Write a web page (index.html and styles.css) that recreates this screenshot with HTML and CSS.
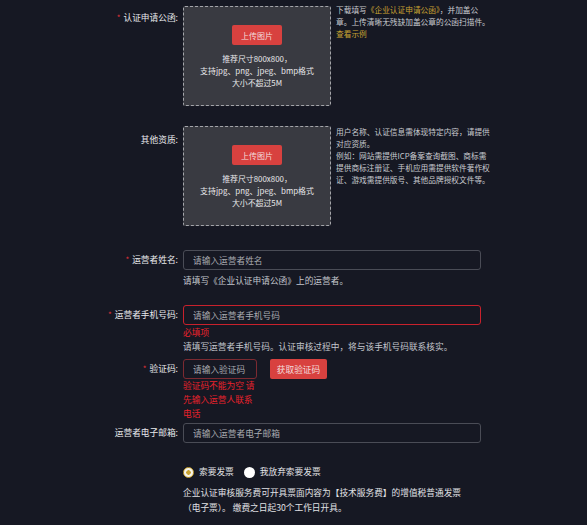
FILE: index.html
```html
<!DOCTYPE html>
<html lang="zh">
<head>
<meta charset="utf-8">
<link rel="stylesheet" href="styles.css">
</head>
<body>
<div class="form">
  <div class="row row-upload first">
    <div class="label"><span class="req">*</span>认证申请公函:</div>
    <div class="upload-wrap">
      <div class="upload">
        <div class="btn btn-upload">上传图片</div>
        <p class="upload-tip">推荐尺寸800x800，<br>支持jpg、png、jpeg、bmp格式<br>大小不超过5M</p>
      </div>
      <div class="side side-first">下载填写<span class="gold">《企业认证申请公函》</span>，并加盖公<br>章。上传清晰无残缺加盖公章的公函扫描件。<br><span class="gold">查看示例</span></div>
    </div>
  </div>

  <div class="row row-upload second">
    <div class="label label-low">其他资质:</div>
    <div class="upload-wrap">
      <div class="upload">
        <div class="btn btn-upload">上传图片</div>
        <p class="upload-tip">推荐尺寸800x800，<br>支持jpg、png、jpeg、bmp格式<br>大小不超过5M</p>
      </div>
      <div class="side">用户名称、认证信息需体现特定内容，请提供<br>对应资质。<br>例如：网站需提供ICP备案查询截图、商标需<br>提供商标注册证、手机应用需提供软件著作权<br>证、游戏需提供版号、其他品牌授权文件等。</div>
    </div>
  </div>

  <div class="row row-input name">
    <div class="label"><span class="req">*</span>运营者姓名:</div>
    <div class="field">
      <input class="input" type="text" placeholder="请输入运营者姓名">
      <div class="hint hint-name">请填写《企业认证申请公函》上的运营者。</div>
    </div>
  </div>

  <div class="row row-input phone">
    <div class="label"><span class="req">*</span>运营者手机号码:</div>
    <div class="field">
      <input class="input input-error" type="text" placeholder="请输入运营者手机号码">
      <div class="err err-phone">必填项</div>
      <div class="hint hint-phone">请填写运营者手机号码。认证审核过程中，将与该手机号码联系核实。</div>
    </div>
  </div>

  <div class="row row-input code">
    <div class="label"><span class="req">*</span>验证码:</div>
    <div class="field">
      <div class="code-line">
        <div class="code-col">
          <input class="input input-code" type="text" placeholder="请输入验证码">
          <div class="err err-code">验证码不能为空 请先输入运营人联系电话</div>
        </div>
        <div class="btn btn-code">获取验证码</div>
      </div>
    </div>
  </div>

  <div class="row row-input email">
    <div class="label">运营者电子邮箱:</div>
    <div class="field">
      <input class="input" type="text" placeholder="请输入运营者电子邮箱">
    </div>
  </div>

  <div class="row invoice">
    <div class="label"></div>
    <div class="field">
      <div class="radios">
        <label class="radio"><span class="dot checked"></span>索要发票</label>
        <label class="radio"><span class="dot"></span>我放弃索要发票</label>
      </div>
      <p class="invoice-text">企业认证审核服务费可开具票面内容为【技术服务费】的增值税普通发票<br>（电子票）。 缴费之日起30个工作日开具。</p>
    </div>
  </div>
</div>
</body>
</html>
```

FILE: styles.css
```css
html, body {
  margin: 0;
  padding: 0;
  background: #161823;
}
body {
  font-family: "Noto Sans CJK SC", "Noto Sans", sans-serif;
  font-size: 8.7px;
  color: #e4e5e8;
  width: 587px;
  height: 525px;
  overflow: hidden;
}
.form {
  display: flex;
  flex-direction: column;
  padding-top: 6px;
}
.row {
  display: grid;
  grid-template-columns: 178px auto;
  column-gap: 5px;
  align-items: start;
}
.label {
  text-align: right;
  white-space: nowrap;
  color: #e8e9ec;
}
.req {
  color: #e0323a;
  margin-right: 3px;
  font-size: 8px;
}
.row-upload .label {
  line-height: 12px;
  padding-top: 6px;
}
.row-upload .label-low {
  padding-top: 8px;
}
.second { margin-top: 20px; }
.upload-wrap {
  display: flex;
  gap: 5px;
  align-items: flex-start;
}
.upload {
  box-sizing: border-box;
  width: 148px;
  height: 100px;
  border: 1px dashed #a4a5aa;
  border-radius: 2px;
  background: #393a41;
  display: flex;
  flex-direction: column;
  align-items: center;
  padding-top: 18px;
}
.btn {
  background: #d8413f;
  color: #f3dcdc;
  border-radius: 2px;
  display: flex;
  align-items: center;
  justify-content: center;
  white-space: nowrap;
}
.btn-upload {
  width: 50px;
  height: 20px;
  font-size: 8px;
}
.upload-tip {
  margin: 8px 0 0;
  text-align: center;
  font-size: 7.9px;
  line-height: 12px;
  color: #e8e8ea;
}
.side {
  font-size: 7.7px;
  line-height: 12px;
  color: #c9cbd0;
  white-space: nowrap;
}
.side-first { margin-top: -2px; }
.gold { color: #c9a332; }

.row-input .label { line-height: 20px; }
.name { margin-top: 24px; }
.phone { margin-top: 18px; }
.code { margin-top: 5px; }
.email { margin-top: 2px; }

.input {
  box-sizing: border-box;
  display: block;
  width: 298px;
  height: 20px;
  margin: 0;
  padding: 0 0 0 9px;
  background: transparent;
  border: 1px solid #4a4c56;
  border-radius: 3px;
  font-family: inherit;
  font-size: 8.7px;
  color: #e4e5e8;
  outline: none;
}
.input::placeholder { color: #a8aab0; }
.input-error { border-color: #c8212c; }
.input-code {
  width: 74px;
  border-color: #7c2a31;
}
.hint {
  color: #c3c6cd;
  white-space: nowrap;
}
.hint-name {
  margin-top: 5px;
  line-height: 12px;
}
.err {
  color: #e8222c;
}
.err-phone { line-height: 14px; margin-top: 1px; }
.hint-phone { line-height: 14px; }
.code-line {
  display: flex;
  align-items: flex-start;
  gap: 13px;
}
.code-col { width: 74px; }
.err-code {
  width: 76px;
  line-height: 14px;
  margin-top: 0;
}
.btn-code {
  width: 57px;
  height: 20px;
  font-size: 8.7px;
}
.invoice { margin-top: 22px; }
.radios {
  display: flex;
  align-items: center;
  gap: 10px;
  line-height: 14px;
}
.radio {
  display: flex;
  align-items: center;
  gap: 5px;
  color: #e4e5e8;
}
.dot {
  box-sizing: border-box;
  width: 11px;
  height: 11px;
  border-radius: 50%;
  background: #ffffff;
}
.dot.checked {
  border: 1.5px solid #c9a332;
  background: radial-gradient(circle, #c9a332 0 2px, #f5f3ea 2.5px);
}
.invoice-text {
  margin: 6px 0 0;
  line-height: 15px;
  color: #e0e1e5;
  white-space: nowrap;
}
```
